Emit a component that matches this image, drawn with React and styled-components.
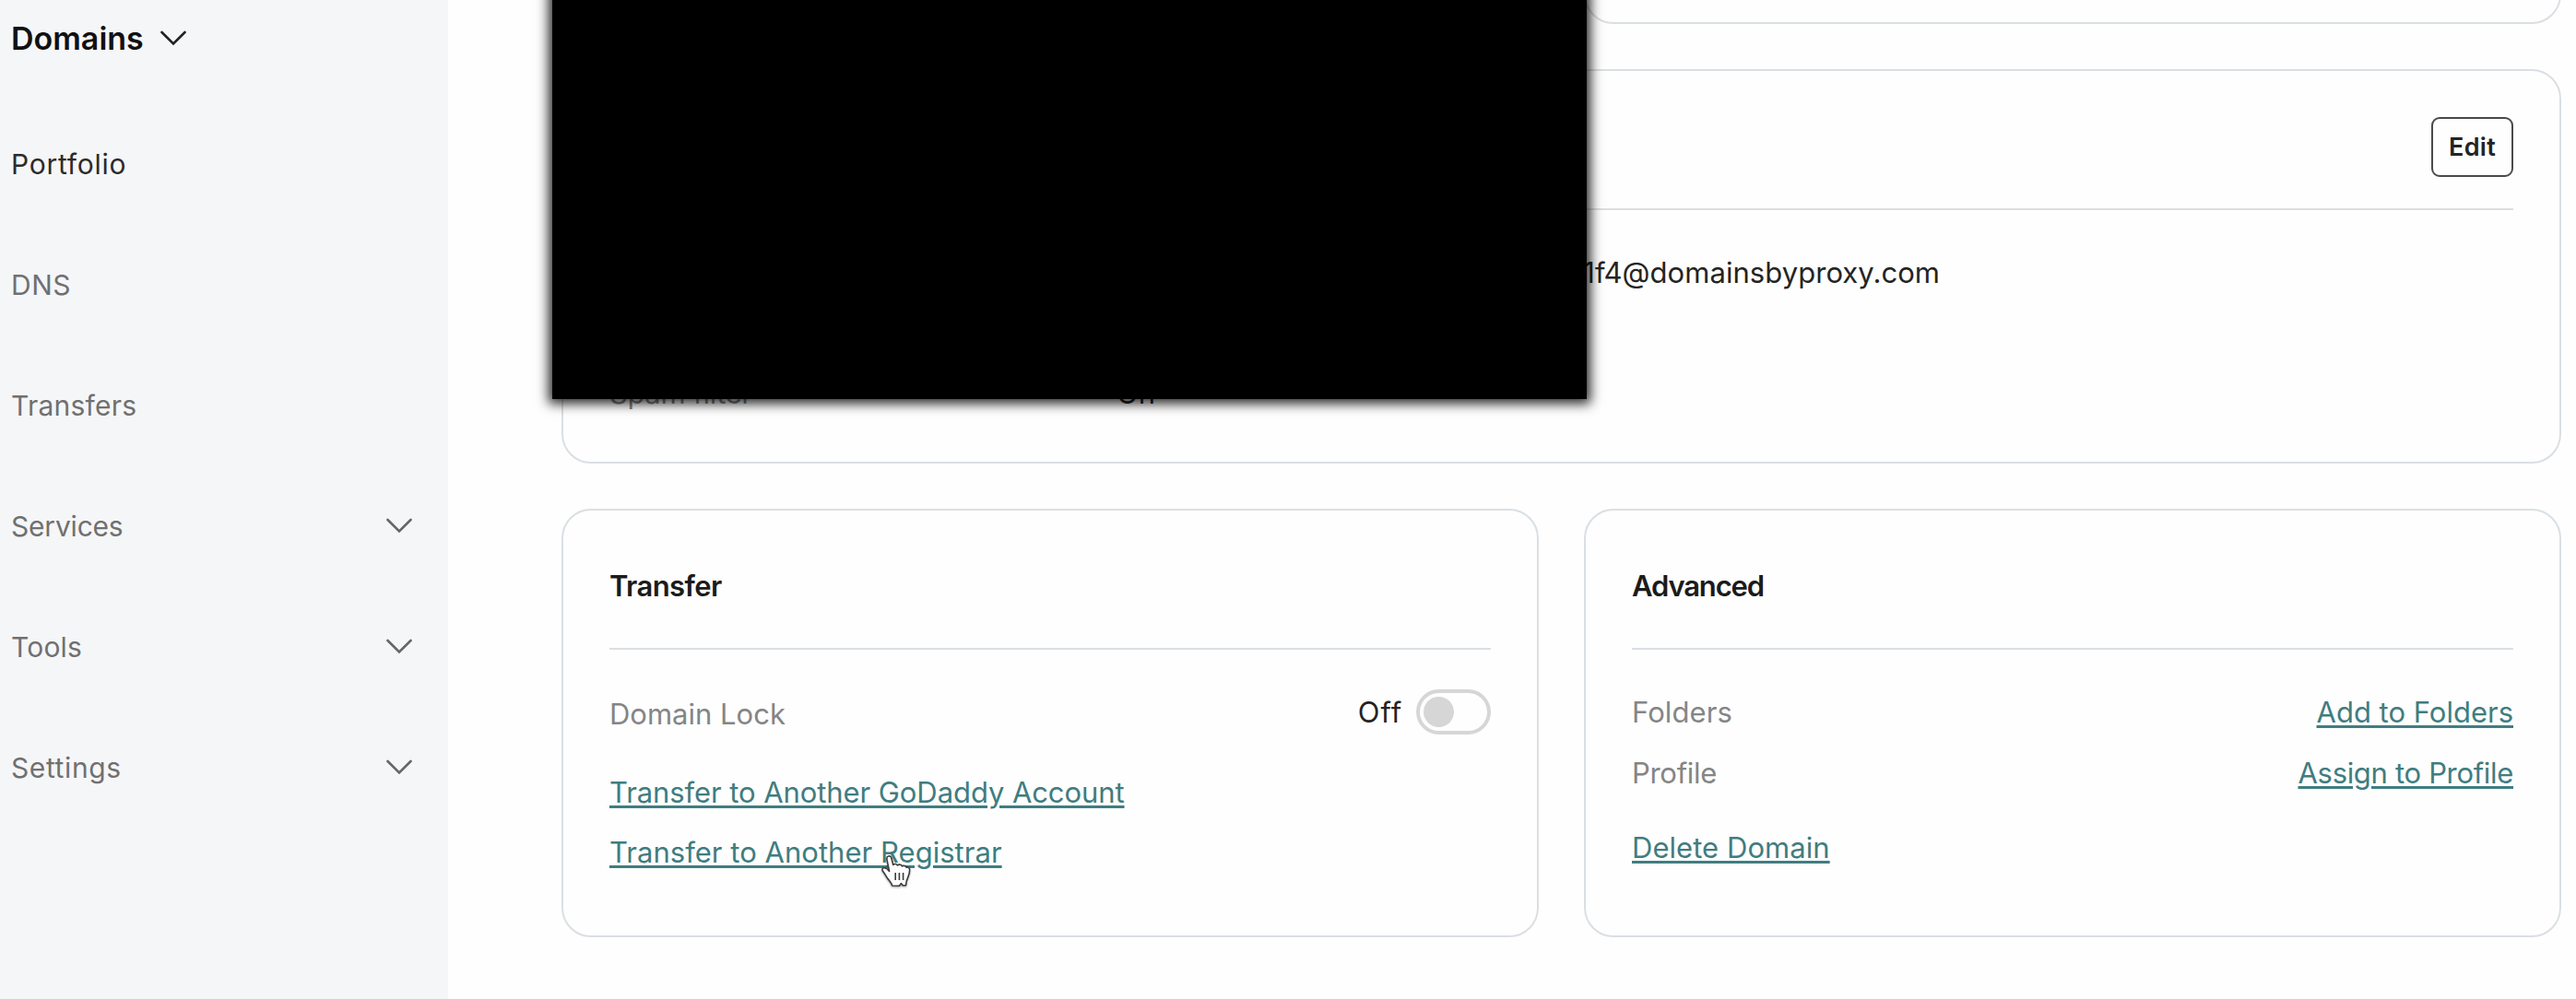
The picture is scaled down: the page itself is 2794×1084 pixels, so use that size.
import React from 'react';
import styled, { createGlobalStyle } from 'styled-components';

const GlobalStyle = createGlobalStyle`
  * {
    box-sizing: border-box;
  }
  body {
    margin: 0;
    background-color: #fefefe;
    font-family: Inter, 'Liberation Sans', sans-serif;
    font-size: 31px;
    color: #242424;
  }
`;

const Page = styled.div`
  position: relative;
  display: flex;
  height: 1084px;
  overflow: hidden;
`;

const Sidebar = styled.nav`
  width: 486px;
  flex-shrink: 0;
  padding: 0 39px 0 12px;
  background-color: #f5f6f8;
`;

const SidebarTitle = styled.div`
  display: flex;
  align-items: center;
  gap: 18px;
  height: 83px;
  margin-bottom: 29px;
  font-size: 34px;
  font-weight: 600;
  color: #111;
`;

const NavItem = styled.div`
  display: flex;
  align-items: center;
  justify-content: space-between;
  height: 131px;
  font-size: 30px;
  color: ${(props) => (props.$active ? '#2b2b2b' : '#707070')};
`;

const Text = styled.span`
  letter-spacing: ${(props) => props.$track || 0}px;
  white-space: nowrap;
`;

const Main = styled.main`
  display: flex;
  flex-direction: column;
  gap: 49px;
  width: 2292px;
  padding: 0 0 0 123px;
`;

const Columns = styled.div`
  display: grid;
  grid-template-columns: 1fr 1fr;
  gap: 49px;
`;

/* only the lower edge of this row is scrolled into view */
const ScrolledColumns = styled(Columns)`
  grid-template-rows: 26px;
  height: 26px;
  align-items: end;
  overflow: hidden;
`;

const Card = styled.section`
  height: ${(props) => props.$height}px;
  padding: 50px;
  border: 2px solid #dadfe3;
  border-radius: 32px;
`;

const LastCard = styled(Card)`
  grid-column: 2;
`;

const CardHeader = styled.header`
  display: flex;
  justify-content: space-between;
  height: 101px;
  margin-bottom: 35px;
  border-bottom: 2px solid #dadfe3;
`;

const CardTitle = styled.h3`
  margin: 0;
  font-size: 31px;
  font-weight: 600;
  line-height: 63px;
  letter-spacing: ${(props) => props.$track || 0}px;
  color: #1b1b1b;
`;

const EditButton = styled.button`
  margin-left: auto;
  width: 89px;
  height: 65px;
  padding: 0;
  border: 2px solid #4a4a4a;
  border-radius: 9px;
  background: none;
  font-family: inherit;
  font-size: 27px;
  font-weight: 600;
  letter-spacing: 0.3px;
  color: #242424;
`;

const Row = styled.div`
  position: relative;
  display: flex;
  align-items: center;
  height: 65.5px;
  margin-top: ${(props) => props.$space || 0}px;
`;

const SpreadRow = styled(Row)`
  justify-content: space-between;
`;

const Label = styled(Text)`
  padding-top: ${(props) => props.$drop || 0}px;
  color: #858585;
`;

const WideLabel = styled(Label)`
  width: 550px;
`;

const Value = styled(Text)`
  width: 893px;
  text-align: ${(props) => props.$align || 'left'};
`;

const Link = styled.a`
  color: #3f7d80;
  letter-spacing: ${(props) => props.$track || 0}px;
  text-decoration: underline;
  text-decoration-thickness: 3px;
  text-underline-offset: 3px;
  white-space: nowrap;
`;

const ToggleGroup = styled.div`
  display: flex;
  align-items: center;
  gap: 15px;
`;

const Toggle = styled.div`
  display: flex;
  align-items: center;
  width: 81px;
  height: 49px;
  padding-left: 4px;
  border: 4px solid #d6d6d6;
  border-radius: 25px;
`;

const Knob = styled.div`
  width: 33px;
  height: 33px;
  border-radius: 50%;
  background-color: #d6d6d6;
`;

const Redaction = styled.div`
  position: absolute;
  top: -20px;
  left: 599px;
  width: 1122px;
  height: 453px;
  background-color: #000;
  box-shadow: 0 1px 12px 4px rgba(0, 0, 0, 0.85);
`;

const Pointer = styled.svg`
  position: absolute;
  top: 34px;
  left: 293px;
  filter: drop-shadow(0 1px 1px rgba(0, 0, 0, 0.35));
`;

function Chevron({ color }) {
  return (
    <svg width="28" height="17" viewBox="0 0 28 17" fill="none">
      <path
        d="M1.5 2 L14 14.5 L26.5 2"
        stroke={color}
        strokeWidth="2.6"
        strokeLinecap="round"
      />
    </svg>
  );
}

function HandPointer() {
  return (
    <Pointer width="36" height="40" viewBox="0 0 36 40">
      <path
        d="M9.8 3 C11.4 2.6 12.5 3.6 12.9 5.2 L14.7 12.4 C16 11 18.8 11.1 19.4 13 C21 11.6 24 12 24.5 14 C26 12.8 28.5 13.6 29.2 15.2 C30.5 14.5 32.6 15.6 32.6 17.6 C32.8 21 31.8 23.6 30.6 26.4 C29.4 29 28.6 30.6 28.6 34.6 L25.2 34.8 L23.4 32.6 L21.4 35.2 L13.6 35 C13.2 32.4 10.6 29.8 8.6 27 C6.6 24.4 5.6 21.6 3.6 19.4 C2.4 18 2.8 16 4.8 15.8 C7 15.6 9 17.4 10.6 19.4 L8 6.8 C7.6 4.8 8 3.4 9.8 3 Z"
        fill="#fff"
        stroke="#3c3c3c"
        strokeWidth="1.6"
        strokeLinejoin="round"
      />
      <path
        d="M17.2 21 V29 M21.4 21 V29 M25.6 21 V29"
        stroke="#3c3c3c"
        strokeWidth="1.6"
      />
    </Pointer>
  );
}

const navItems = [
  { label: 'Portfolio', track: 0.75, active: true },
  { label: 'DNS', track: 0.5 },
  { label: 'Transfers', track: 0.25 },
  { label: 'Services', track: -0.2, expandable: true },
  { label: 'Tools', track: 0.2, expandable: true },
  { label: 'Settings', track: 0.6, expandable: true },
];

export default function App() {
  return (
    <>
      <GlobalStyle />
      <Page>
        <Sidebar>
          <SidebarTitle>
            <Text>Domains</Text>
            <Chevron color="#222" />
          </SidebarTitle>
          {navItems.map((item) => (
            <NavItem key={item.label} $active={item.active}>
              <Text $track={item.track}>{item.label}</Text>
              {item.expandable && <Chevron color="#666" />}
            </NavItem>
          ))}
        </Sidebar>
        <Main>
          <ScrolledColumns>
            <LastCard $height={120} />
          </ScrolledColumns>
          <Card $height={428}>
            <CardHeader>
              <EditButton>Edit</EditButton>
            </CardHeader>
            <Row>
              <WideLabel />
              <Value $align="right" $track={0.05}>
                1f4@domainsbyproxy.com
              </Value>
            </Row>
            <Row $space={65.5}>
              <WideLabel $track={-0.4}>Spam filter</WideLabel>
              <Value>On</Value>
            </Row>
          </Card>
          <Columns>
            <Card $height={465}>
              <CardHeader>
                <CardTitle $track={-0.6}>Transfer</CardTitle>
              </CardHeader>
              <SpreadRow>
                <Label $drop={4}>Domain Lock</Label>
                <ToggleGroup>
                  <Text $track={0.9}>Off</Text>
                  <Toggle>
                    <Knob />
                  </Toggle>
                </ToggleGroup>
              </SpreadRow>
              <Row $space={21}>
                <Link $track={-0.08}>Transfer to Another GoDaddy Account</Link>
              </Row>
              <Row>
                <Link $track={0.03}>Transfer to Another Registrar</Link>
                <HandPointer />
              </Row>
            </Card>
            <Card $height={465}>
              <CardHeader>
                <CardTitle $track={-1.15}>Advanced</CardTitle>
              </CardHeader>
              <SpreadRow>
                <Label $track={0.1}>Folders</Label>
                <Link>Add to Folders</Link>
              </SpreadRow>
              <SpreadRow>
                <Label $track={-0.3}>Profile</Label>
                <Link $track={-0.32}>Assign to Profile</Link>
              </SpreadRow>
              <Row $space={16}>
                <Link $track={0.05}>Delete Domain</Link>
              </Row>
            </Card>
          </Columns>
        </Main>
        <Redaction />
      </Page>
    </>
  );
}
